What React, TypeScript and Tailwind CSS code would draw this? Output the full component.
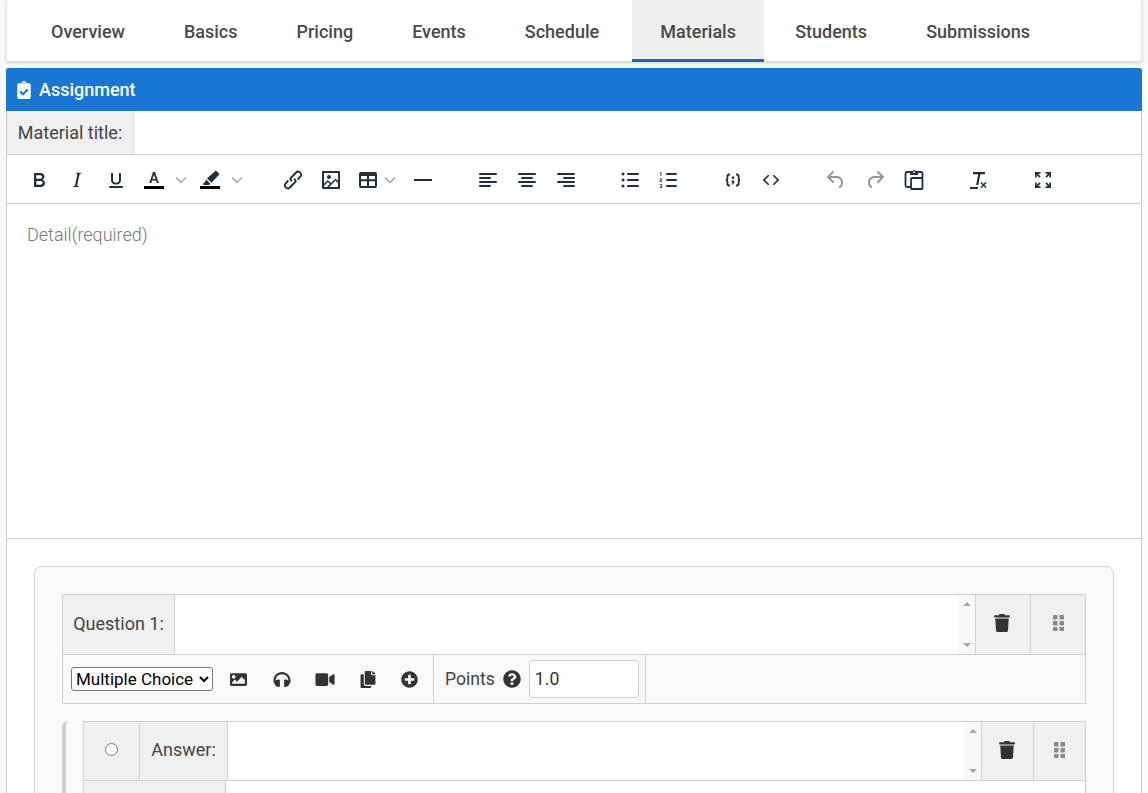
// App.tsx
// Course editor, Materials tab with an assignment form

import { FaClipboardCheck, FaCopy, FaHeadphones, FaImage, FaPlusCircle, FaQuestionCircle, FaTrash, FaVideo } from 'react-icons/fa'

const tabs = ['Overview', 'Basics', 'Pricing', 'Events', 'Schedule', 'Materials', 'Students', 'Submissions']

function Tool({ margin, d, muted, children }: { margin: string; d?: string; muted?: boolean; children?: React.ReactNode }) {
  return (
    <span className={`${margin} flex h-6 w-6 shrink-0 items-center justify-center`}>
      <svg width="24" height="24" viewBox="0 0 24 24" className={muted ? 'fill-[#91979e]' : 'fill-[#222f3e]'}>
        {d && <path d={d} />}
        {children}
      </svg>
    </span>
  )
}

function Chevron({ margin }: { margin: string }) {
  return (
    <span className={`${margin} flex h-6 w-3 shrink-0 items-center justify-center`}>
      <svg width="12" height="8" viewBox="0 0 12 8" className="fill-none stroke-[#9aa1a8] stroke-[1.4]">
        <path d="M1 1.5l5 5 5-5" />
      </svg>
    </span>
  )
}

function Grip() {
  return (
    <svg width="11" height="16" viewBox="0 0 11 16" className="fill-[#888]">
      <rect x="0" y="0" width="4.500" height="4.500" rx="1" />
      <rect x="6.500" y="0" width="4.500" height="4.500" />
      <rect x="0" y="6" width="4.500" height="4.500" rx="1" />
      <rect x="6.500" y="6" width="4.500" height="4.500" rx="1" />
      <rect x="0" y="12" width="4.500" height="4" rx="1" />
      <rect x="6.500" y="12" width="4.500" height="4" />
    </svg>
  )
}

function ScrollStrip() {
  return (
    <div className="flex w-[17px] shrink-0 flex-col items-center justify-between bg-[#f8f8f8] py-[7px]">
      <span className="h-0 w-0 border-x-[4px] border-b-[4px] border-x-transparent border-b-[#a3a3a3]" />
      <span className="h-0 w-0 border-x-[4px] border-t-[4px] border-x-transparent border-t-[#a3a3a3]" />
    </div>
  )
}

function AddonCell({ width, children }: { width: string; children?: React.ReactNode }) {
  return (
    <div className={`${width} flex shrink-0 items-center justify-center border-r border-[#ced0d4] bg-[#f0f0f0] pb-[3px] text-[18px] text-[#444]`}>
      {children}
    </div>
  )
}

export default function App() {
  return (
    <div className="h-[793px] w-[1148px] overflow-hidden bg-[#f9f9fd] font-['Roboto',sans-serif] text-[18px] text-[#444]">
      {/* Tab bar */}
      <div className="mx-[6px] flex h-[63px] items-stretch gap-[5px] rounded-[3px] border-x border-b-2 border-x-[#e8e8e8] border-b-[#dedede] bg-white pl-[17px] shadow-[0_0_3px_rgba(0,0,0,0.18)]">
        {tabs.map((tab) => (
          <div
            key={tab}
            className={`flex h-[62px] items-center text-[18px] font-medium text-[#4a4a4a] ${
              tab === 'Materials'
                ? '-mr-px ml-px w-[132px] justify-center border-b-[3px] border-[#1a66c0] bg-[#efefef] pt-[3px]'
                : 'px-[27px]'
            }`}
          >
            {tab}
          </div>
        ))}
      </div>

      <div className="mx-[6px] mt-[5px] border-x border-[#c9c9d8] bg-white">
        {/* Section header */}
        <div className="-mx-px flex h-[43px] items-center rounded-t-[3px] bg-[#1976d2] pl-[11px] text-[18px] font-medium text-white">
          <FaClipboardCheck className="mr-[8px] h-[18px] w-[14px]" />
          <span>Assignment</span>
        </div>

        {/* Title input */}
        <div className="flex h-[44px] border-b border-[#cfcfcf]">
          <div className="flex w-[127px] items-center justify-center border-r border-[#d9d9d9] bg-[#f0f0f0] text-[18px] text-[#444]">
            Material title:
          </div>
          <input className="min-w-0 flex-1 bg-white outline-none" />
        </div>

        {/* Editor toolbar */}
        <div className="flex h-[49px] items-center border-b border-[#cfcfcf] pt-[2px]">
          <Tool margin="ml-[20px]" d="M7.8 19c-.3 0-.5 0-.6-.2l-.2-.5V5.7c0-.2 0-.4.2-.5l.6-.2h5c1.5 0 2.7.3 3.5 1 .7.6 1.1 1.4 1.1 2.5a3 3 0 0 1-.6 1.9c-.4.6-1 1-1.6 1.2.4.1.9.3 1.3.6s.8.7 1 1.2c.4.4.5 1 .5 1.6 0 1.3-.4 2.3-1.3 3-.8.7-2.1 1-3.8 1H7.8zm5-8.3c.6 0 1.2-.1 1.6-.5.4-.3.6-.7.6-1.3 0-1.1-.8-1.7-2.3-1.7H9.3v3.5h3.4zm.5 6c.7 0 1.3-.1 1.7-.4.4-.4.6-.9.6-1.5s-.2-1-.7-1.4c-.4-.3-1-.4-2-.4H9.4v3.8h4z" />
          <Tool margin="ml-[14px]" d="M16.7 4.700l-.1.9h-.3c-.6 0-1 0-1.400.3-.3.3-.4.6-.5 1.100l-2.100 9.800v.6c0 .5.4.8 1.400.8h.2l-.2.8H7.800l.2-.8h.2c1.100 0 1.800-.5 2-1.500l2-9.800.1-.5c0-.6-.4-.8-1.400-.8h-.3l.2-.9h5.800z" />
          <Tool margin="ml-[15px]" d="M16 5c.6 0 1 .4 1 1v6c0 2.8-2.2 4.600-5 4.600S7 14.800 7 12V6c0-.6.4-1 1-1s1 .4 1 1v6c0 1.700 1.300 2.800 3 2.800s3-1.100 3-2.800V6c0-.6.4-1 1-1zM6 18h12c.6 0 1 .4 1 1s-.4 1-1 1H6a1 1 0 1 1 0-2z" />
          <Tool margin="ml-[14px]">
            <path d="M11 4h2l3.800 11h-2l-.8-2.500h-3.900L9.300 15h-2l3.700-11zm1 2.700l-1.400 4.300h2.800L12 6.700z" />
            <rect x="2" y="18" width="20" height="3" fill="#000" />
          </Tool>
          <Chevron margin="ml-[9px]" />
          <Tool margin="ml-[11px]">
            <path d="M17 3.200a1.200 1.200 0 0 1 1.700 0l2.100 2.100a1.200 1.200 0 0 1 0 1.700l-7.300 7.800-4.500-4.400 8-7.200zM8.200 11.400l4.300 4.300-1.500 1.300H5.800l-1-.9 2.600-2.500.8-2.200z" />
            <rect x="2" y="18" width="20" height="3" fill="#000" />
          </Tool>
          <Chevron margin="ml-[9px]" />
          <Tool margin="ml-[38px]" d="M6.2 12.300a1 1 0 0 1 1.400 1.400l-2 2a2 2 0 1 0 2.800 2.800l4.800-4.800a1 1 0 0 0 0-1.400 1 1 0 1 1 1.400-1.300 2.900 2.900 0 0 1 0 4.100L9.800 20a3.900 3.900 0 0 1-5.600-5.600l2-2.100zm11.600-.6a1 1 0 0 1-1.400-1.400l2-2a2 2 0 1 0-2.800-2.800l-4.800 4.800a1 1 0 0 0 0 1.400 1 1 0 1 1-1.400 1.300 2.900 2.900 0 0 1 0-4.100L14.200 4a3.900 3.900 0 0 1 5.600 5.600l-2 2.100z" />
          <Tool margin="ml-[14px]" d="M5 15.700l3.300-3.200c.3-.3.7-.3 1 0L12 15l4.100-4c.3-.4.8-.4 1 0l2 1.900V5H5v10.700zM5 18v1h3l2.800-2.900-2-2L5 17.900zm14-3l-2.500-2.400-6.400 6.500H19v-4zM4 3h16c.6 0 1 .4 1 1v16c0 .6-.4 1-1 1H4a1 1 0 0 1-1-1V4c0-.6.4-1 1-1zm6 8a2 2 0 1 0 0-4 2 2 0 0 0 0 4z" />
          <Tool margin="ml-[13px]" d="M19 4a2 2 0 0 1 2 2v12a2 2 0 0 1-2 2H5a2 2 0 0 1-2-2V6c0-1.100.9-2 2-2h14zM5 13.200V18h6v-4.800H5zm14 0h-6V18h6v-4.800zM19 8h-6v3.200h6V8zM5 11.200h6V8H5v3.200z" />
          <Chevron margin="ml-[4px]" />
          <Tool margin="ml-[15px]" d="M3 11h18v2H3z" />
          <Tool margin="ml-[41px]" d="M4 5h16a1 1 0 0 1 0 2H4a1 1 0 1 1 0-2zm0 4h10a1 1 0 0 1 0 2H4a1 1 0 1 1 0-2zm0 4h16a1 1 0 0 1 0 2H4a1 1 0 0 1 0-2zm0 4h10a1 1 0 0 1 0 2H4a1 1 0 0 1 0-2z" />
          <Tool margin="ml-[15px]" d="M4 5h16a1 1 0 0 1 0 2H4a1 1 0 1 1 0-2zm3 4h10a1 1 0 0 1 0 2H7a1 1 0 0 1 0-2zm-3 4h16a1 1 0 0 1 0 2H4a1 1 0 0 1 0-2zm3 4h10a1 1 0 0 1 0 2H7a1 1 0 0 1 0-2z" />
          <Tool margin="ml-[15px]" d="M4 5h16a1 1 0 0 1 0 2H4a1 1 0 1 1 0-2zm6 4h10a1 1 0 0 1 0 2H10a1 1 0 0 1 0-2zm-6 4h16a1 1 0 0 1 0 2H4a1 1 0 0 1 0-2zm6 4h10a1 1 0 0 1 0 2H10a1 1 0 0 1 0-2z" />
          <Tool margin="ml-[40px]">
            <path d="M10 5h10a1 1 0 0 1 0 2H10a1 1 0 0 1 0-2zm0 6h10a1 1 0 0 1 0 2H10a1 1 0 0 1 0-2zm0 6h10a1 1 0 0 1 0 2H10a1 1 0 0 1 0-2z" />
            <circle cx="5" cy="6" r="1.500" />
            <circle cx="5" cy="12" r="1.500" />
            <circle cx="5" cy="18" r="1.500" />
          </Tool>
          <Tool margin="ml-[14px]">
            <path d="M11 5h9a1 1 0 0 1 0 2h-9a1 1 0 0 1 0-2zm0 6h9a1 1 0 0 1 0 2h-9a1 1 0 0 1 0-2zm0 6h9a1 1 0 0 1 0 2h-9a1 1 0 0 1 0-2z" />
            <path d="M4.400 4h1v4h-.9V5h-.6zM3.600 10.400h2.600v1.100L4.700 13h1.600v.8H3.500v-.9L5.200 11.200H3.600zM3.600 16.200h2.600v3.800H3.600v-.8h1.800v-.7H4.200v-.6h1.200v-.9H3.600z" />
          </Tool>
          <Tool margin="ml-[41px]">
            <path fill="none" stroke="#222f3e" strokeWidth="1.800" d="M9 6.500H8.200C7 6.500 6.400 7.200 6.400 8.200V10.500c0 .8-.5 1.300-1.400 1.500.9.200 1.400.7 1.400 1.500v2.300c0 1 .6 1.700 1.800 1.700H9M15 6.500h.8c1.200 0 1.800.7 1.800 1.700v2.300c0 .8.500 1.300 1.400 1.500-.9.200-1.400.7-1.400 1.500v2.300c0 1-.6 1.700-1.800 1.700H15" />
            <path d="M10.800 8.500h2.400v2.200h-2.400zM10.800 12.500h2.400v2L12 16.500h-1.200l.7-2h-.7z" />
          </Tool>
          <Tool margin="ml-[14px]" d="M9.800 15.700c.3.3.3.8 0 1-.3.4-.9.4-1.200 0l-4.400-4.100a.8.8 0 0 1 0-1.200l4.400-4.200c.3-.3.9-.3 1.200 0 .3.3.3.8 0 1.100L6 12l3.800 3.700zm4.400 0l3.800-3.700-3.800-3.700a.8.8 0 0 1 0-1.100c.3-.3.9-.3 1.200 0l4.400 4.200c.4.3.4.9 0 1.200l-4.400 4.100c-.3.4-.9.4-1.200 0a.8.8 0 0 1 0-1z" />
          <Tool margin="ml-[41px]" muted d="M6.400 8H12c3.700 0 6.200 2 6.800 5.100.6 2.700-.4 5.600-2.300 6.800a1 1 0 0 1-1-1.800c1.100-.7 1.800-2.700 1.400-4.600-.5-2.100-2.100-3.500-4.900-3.500H6.400l3.300 3.300a1 1 0 1 1-1.400 1.400l-5-5a1 1 0 0 1 0-1.400l5-5a1 1 0 0 1 1.400 1.400L6.400 8z" />
          <Tool margin="ml-[15px]" muted d="M17.600 8H12c-3.700 0-6.200 2-6.800 5.100-.6 2.700.4 5.600 2.300 6.800a1 1 0 0 0 1-1.800c-1.100-.7-1.800-2.700-1.400-4.600.5-2.100 2.100-3.500 4.900-3.500h5.600l-3.300 3.300a1 1 0 1 0 1.400 1.400l5-5a1 1 0 0 0 0-1.400l-5-5a1 1 0 0 0-1.400 1.400L17.600 8z" />
          <Tool margin="ml-[15px]">
            <path fill="none" stroke="#222f3e" strokeWidth="1.800" d="M9 19H5A1.500 1.500 0 0 1 3.500 17.500V5.500A1.500 1.500 0 0 1 5 4h3.500M15.500 4H19a1.500 1.500 0 0 1 1.500 1.500V10" />
            <rect x="9" y="10" width="11.500" height="11" rx="1" fill="none" stroke="#222f3e" strokeWidth="1.800" />
            <path d="M8 3h2.600a1.500 1.500 0 0 1 2.800 0H16v4H8z" />
            <circle cx="12" cy="4.200" r="0.900" fill="#fff" />
          </Tool>
          <Tool margin="ml-[39px]" d="M8 4h12v2.200h-4.600L13.300 17h-2.200l2.100-10.800H8zM5 19h8v2H5zM16.400 14l2.100 2.100 2.100-2.100 1 1-2.100 2.100 2.100 2.100-1 1-2.100-2.100-2.100 2.100-1-1 2.100-2.100-2.100-2.100z" />
          <Tool margin="ml-[42px]" d="M4 4h5.500v1.700H7l2.700 2.700-1.300 1.300L5.700 7v2.500H4zM14.500 4H20v5.500h-1.700V7l-2.700 2.700-1.300-1.300L17 5.700h-2.500zM8.400 14.300l1.300 1.300L7 18.300h2.500V20H4v-5.500h1.700V17zM15.600 14.300l2.700 2.700v-2.500H20V20h-5.500v-1.700H17l-2.700-2.700z" />
        </div>

        {/* Editor body */}
        <div className="h-[335px] border-b border-[#cfcfcf] pl-[20px] pt-[17px] text-[18px] font-light text-[#777]">
          Detail(required)
        </div>

        {/* Question card */}
        <div className="px-[27px] pt-[27px]">
          <div className="h-[300px] rounded-[8px] border border-[#d4d4d4] bg-[#f9f9f9] px-[27px] pt-[27px]">
            {/* Question row */}
            <div className="border border-[#ced0d4]">
              <div className="flex h-[60px] border-b border-[#ced0d4]">
                <AddonCell width="w-[112px]">Question 1:</AddonCell>
                <textarea className="min-w-0 flex-1 resize-none bg-white outline-none" />
                <ScrollStrip />
                <div className="flex w-[56px] shrink-0 items-center justify-center border-x border-[#ced0d4] bg-[#f0f0f0] pb-[3px] pr-[2px]">
                  <FaTrash className="h-[18px] w-[16px] text-[#333]" />
                </div>
                <div className="flex w-[54px] shrink-0 items-center justify-center bg-[#f0f0f0] pb-[3px]">
                  <Grip />
                </div>
              </div>
              {/* Question options */}
              <div className="flex h-[48px] items-center bg-[#f9f9f9]">
                <div className="flex h-full w-[371px] shrink-0 items-center border-r border-[#ced0d4] pl-[8px]">
                  <select className="h-[24px] w-[142px] rounded-[3px] border border-[#767676] bg-white font-['Roboto',sans-serif] text-[17px] text-black">
                    <option>Multiple Choice</option>
                  </select>
                  <FaImage className="ml-[17px] h-[17px] w-[17px] text-[#333]" />
                  <FaHeadphones className="ml-[26px] h-[17px] w-[18px] text-[#333]" />
                  <FaVideo className="ml-[24px] h-[17px] w-[20px] text-[#333]" />
                  <FaCopy className="ml-[25px] h-[17px] w-[16px] text-[#333]" />
                  <FaPlusCircle className="ml-[25px] h-[17px] w-[17px] text-[#333]" />
                </div>
                <div className="flex h-full w-[212px] shrink-0 items-center border-r border-[#ced0d4] pl-[11px]">
                  <span className="text-[17.6px]">Points</span>
                  <FaQuestionCircle className="ml-[8px] h-[18px] w-[18px] text-[#333]" />
                  <input
                    readOnly
                    value="1.0"
                    className="ml-[8px] h-[38px] w-[110px] rounded-[3px] border border-[#ced0d4] bg-white pl-[5px] text-[17.6px] text-[#333] outline-none"
                  />
                </div>
              </div>
            </div>

            {/* Answer row */}
            <div className="mt-[17px] rounded-tl-[6px] border-l-[4px] border-[#ced0d4] pl-[17px]">
              <div className="border border-[#ced0d4]">
                <div className="flex h-[59px] border-b border-[#ced0d4]">
                  <AddonCell width="w-[56px]">
                    <input type="radio" className="h-[13px] w-[13px]" />
                  </AddonCell>
                  <AddonCell width="w-[88px]">Answer:</AddonCell>
                  <textarea className="min-w-0 flex-1 resize-none bg-white outline-none" />
                  <ScrollStrip />
                  <div className="flex w-[53px] shrink-0 items-center justify-center border-x border-[#ced0d4] bg-[#f0f0f0] pb-[3px] pr-[2px]">
                    <FaTrash className="h-[18px] w-[16px] text-[#333]" />
                  </div>
                  <div className="flex w-[51px] shrink-0 items-center justify-center bg-[#f0f0f0] pb-[3px]">
                    <Grip />
                  </div>
                </div>
                <div className="flex h-[40px]">
                  <div className="w-[142px] border-r border-[#ced0d4] bg-[#f0f0f0]" />
                  <div className="flex-1 bg-white" />
                </div>
              </div>
            </div>
          </div>
        </div>
      </div>
    </div>
  )
}
